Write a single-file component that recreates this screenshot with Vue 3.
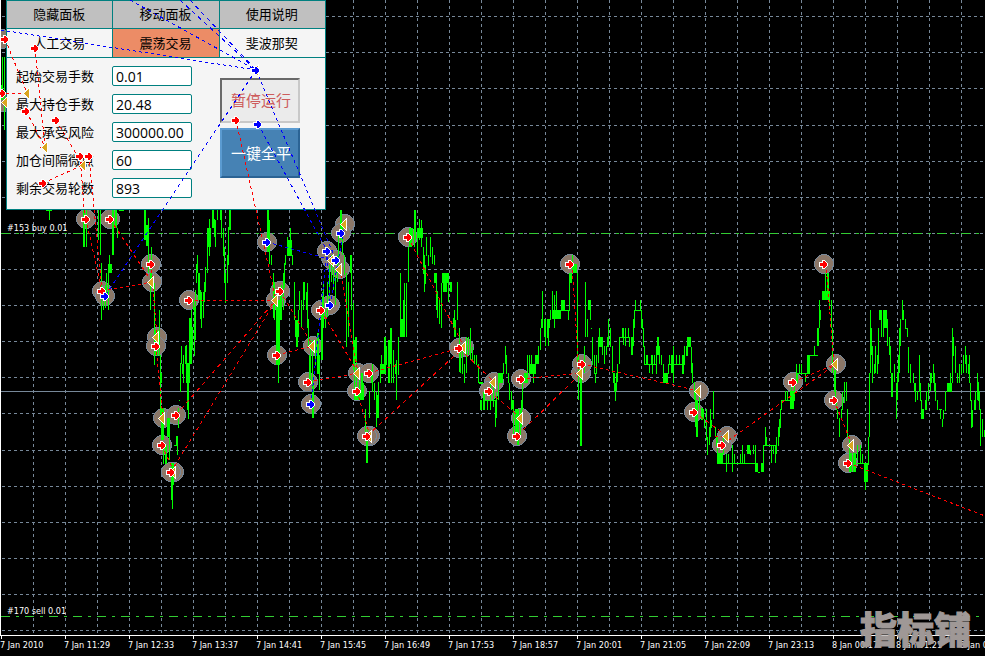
<template>
  <div class="terminal">
    <main class="plot">
      <svg class="layer" aria-hidden="true">
        <line v-for="y in gridRows" :key="'r' + y" class="grid" x1="2" :y1="y" x2="100%" :y2="y" />
        <line v-for="x in gridCols" :key="'c' + x" class="grid" :x1="x" y1="0" :x2="x" y2="100%" />
        <line class="level" x1="1" y1="391.5" x2="100%" y2="391.5" />
        <line class="order" x1="1" y1="233.5" x2="100%" y2="233.5" />
        <line class="order" x1="1" y1="616.5" x2="100%" y2="616.5" />
        <circle v-for="(m, i) in circles" :key="'o' + i" class="halo" :cx="m.x" :cy="m.y" r="9.5" />
        <rect v-for="(b, i) in bars" :key="'b' + i" class="bar" :x="b.x" :y="b.y" :width="b.w" :height="b.h" />
        <line class="edge" x1="0.5" y1="0" x2="0.5" y2="100%" />
        <text class="order-label" x="7" y="231">#153 buy 0.01</text>
        <text class="order-label" x="7" y="614">#170 sell 0.01</text>
      </svg>

      <form class="panel" @submit.prevent>
        <div class="tabs">
          <button type="button" class="head">隐藏面板</button>
          <button type="button" class="head">移动面板</button>
          <button type="button" class="head">使用说明</button>
          <button
            v-for="tab in tabs"
            :key="tab"
            type="button"
            :class="{ active: tab === activeTab }"
            @click="activeTab = tab"
          >{{ tab }}</button>
        </div>
        <div class="panel-body">
          <div class="fields">
            <template v-for="field in fields" :key="field.id">
              <label :for="field.id">{{ field.label }}</label>
              <input :id="field.id" v-model="field.value" type="text">
            </template>
          </div>
          <div class="actions">
            <button type="button" class="pause-btn">暂停运行</button>
            <button type="button" class="close-btn">一键全平</button>
          </div>
        </div>
      </form>

      <svg class="layer overlay" aria-hidden="true">
        <line
          v-for="(l, i) in trades"
          :key="'t' + i"
          class="trade"
          :class="l.color"
          :x1="l.x1"
          :y1="l.y1"
          :x2="l.x2"
          :y2="l.y2"
          :stroke-dasharray="l.dash"
        />
        <g v-for="(m, i) in marks" :key="'m' + i" :transform="`translate(${m.x} ${m.y})`">
          <path v-if="m.kind === 'exit'" class="exit" d="M-4 0.5 L1 -4 V5 Z" />
          <path v-else class="entry" :class="m.kind" d="M-4 -1 H-1 V-3 H0 L3 0 V1 L0 4 H-1 V2 H-4 Z" />
        </g>
      </svg>
    </main>

    <footer class="axis">
      <span v-for="t in times" :key="t">{{ t }}</span>
    </footer>
    <div class="watermark">指标铺</div>
  </div>
</template>

<script setup>
import { ref } from 'vue'

const tabs = ['人工交易', '震荡交易', '斐波那契']
const activeTab = ref('震荡交易')

const fields = ref([
  { id: 'lots', label: '起始交易手数', value: '0.01' },
  { id: 'max-lots', label: '最大持仓手数', value: '20.48' },
  { id: 'max-risk', label: '最大承受风险', value: '300000.00' },
  { id: 'step', label: '加仓间隔微点', value: '60' },
  { id: 'rounds', label: '剩余交易轮数', value: '893' }
])

const times = [
  '7 Jan 2010', '7 Jan 11:29', '7 Jan 12:33', '7 Jan 13:37', '7 Jan 14:41', '7 Jan 15:45',
  '7 Jan 16:49', '7 Jan 17:53', '7 Jan 18:57', '7 Jan 20:01', '7 Jan 21:05', '7 Jan 22:09',
  '7 Jan 23:13', '8 Jan 00:17', '8 Jan 01:21', '8 Jan 02:25'
]

const gridRows = [16, 52, 88, 125, 161, 197, 233, 269, 305, 341, 377, 413, 450, 486, 522, 558, 594, 630].map(y => y + 0.5)
const gridCols = Array.from({ length: 60 }, (_, i) => 33.5 + i * 32)

// x, top, bottom, width (1 when left out)
const barData = `
2 57 93;4 57 130;1 85 100 2;49 210 220;46 210 211 6;83 210 247 2;86 210 247;98 210 240;100 210 255;
101 263 320;103 290 310;105 285 308;106 273 300;108 264 310;108 264 273 4;109 255 273;112 210 255 2;
115 210 228 2;117 228 238;119 210 211 5;144 210 240 2;146 225 246 3;148 218 273;150 273 310;151 247 283;
154 283 365;155 330 355;157 330 356;159 310 356;160 373 383 2;160 355 415;161 408 440 3;163 445 464;
165 445 464 2;167 418 437 3;169 418 460;171 463 500 2;172 480 509;173 463 485;174 445 446 4;177 436 455;
176 436 445;178 408 428;179 400 401;180 363 392;181 346 364;182 364 374;183 355 383;185 346 364;
186 345 383;187 363 410 2;188 390 419;189 318 383;190 318 364;191 310 364;192 327 350;194 307 356;
193 300 310;195 290 340;196 264 283;197 255 273;198 273 300;199 273 300;200 290 319;201 292 328;
203 292 318;204 282 302;205 267 292;207 228 273;207 228 247 4;209 219 256;212 210 228 2;214 219 237;
215 220 247;217 210 220;220 210 220 2;221 210 238;223 228 256;224 247 283;225 273 303;227 255 283;
228 227 265;229 210 230 2;267 210 252 2;269 220 264;271 255 265;273 273 318;274 282 320;276 300 365 4;
278 330 383;280 290 320;281 285 320;283 273 310;284 263 288;285 255 265;287 237 256;288 240 256 4;
290 228 256;292 255 265;294 282 320;295 320 337;296 320 347 2;298 310 337;299 291 310;301 300 328;
303 282 310;304 282 300;306 292 310;307 283 328;308 319 346;309 355 383;310 340 383;312 340 418;
313 383 418;315 340 365;317 333 374 2;319 355 390;321 310 360 2;322 292 330;323 283 328;325 310 328;
327 282 317;329 265 300;331 255 282;333 263 290;335 270 305;337 255 282;338 236 264;340 210 240 2;
342 227 255;344 255 275;346 273 347;348 282 337;350 255 273;351 255 310;353 303 370;354 340 400;
355 337 362 2;356 346 395;355 391 400 9;359 373 400;361 373 400 2;363 383 400;365 409 440;
366 437 463 2;367 428 450;369 391 418;371 370 383;372 364 392;374 383 400;376 392 427;377 395 418;
378 382 418;380 364 383;381 355 374;382 364 374 4;384 337 374 2;386 346 365;388 340 383 2;
390 328 364;391 328 383;393 350 383;395 364 374 2;396 360 400;398 347 375;398 337 356;400 273 337;
401 319 337 2;403 300 337;404 283 337;406 283 337;408 247 282;409 228 247 3;412 228 240;
414 210 247;415 210 240;417 228 255;419 219 240;418 228 238 5;421 220 247;423 247 274;424 255 292;
425 265 284;426 237 256;428 255 266;430 237 257;432 247 264;434 255 265;434 273 283 3;436 283 310;
437 291 318;439 300 324;441 283 328;442 273 283 7;443 283 292 4;448 283 302;450 282 292 2;451 282 290;
453 318 328;454 310 337;455 320 337;457 282 320;459 328 372;460 352 373;462 350 374;464 364 383;
466 337 373;468 337 355;470 328 360;472 347 360;474 355 364;476 355 365;478 364 383;479 382 384 4;
480 400 410 2;483 392 410 2;485 400 401 10;487 400 410;490 382 410;493 383 407;495 400 427;
496 392 418;498 373 400;499 373 383 4;503 363 374;505 346 364;506 355 374;508 373 383;509 383 400;
511 391 410;512 400 409;513 400 437;515 409 437 3;517 437 445;518 409 445;520 410 437;521 400 427;
522 383 410;524 373 383 3;527 355 383;529 355 374;530 364 374 6;531 355 364;533 364 383;535 355 364 4;
538 346 356;540 328 350;541 319 328;542 291 328;544 319 337;545 319 346;547 319 338 2;549 319 328;
548 328 346;550 310 320;552 291 319;553 310 319 8;554 295 328;556 291 310;560 310 311 10;561 300 310 4;
568 310 320;569 273 310;570 273 283 2;572 255 273;573 264 273 4;577 273 365;578 355 400;580 373 446 2;
584 346 373;585 282 337;587 319 337;588 300 310 3;590 300 320;591 328 329;592 337 365;594 355 374;
595 373 383;596 355 374;598 337 363;598 337 347 4;599 328 337;602 337 355;604 346 364;606 346 355;
607 337 347;608 319 347;610 328 347;612 346 373;613 373 383;614 373 392;615 383 401;616 373 391;
617 364 382;619 337 364;619 337 338 10;622 328 337;623 328 345;625 328 346;628 328 337;629 337 347;
631 337 355 2;633 319 346;634 310 328;635 300 311;636 310 311 5;640 300 311;641 310 328;642 319 329;
643 328 347;644 346 364;644 364 365 12;646 355 364 2;649 364 373;651 355 364 2;652 364 374;654 355 364;
656 346 374;657 337 355 2;659 346 364;661 355 365;663 364 383;664 373 383 4;668 364 374;669 355 365;
669 364 365 16;671 355 373 2;673 346 383;676 355 364;679 355 365;682 355 374 2;684 346 364;
686 346 356 2;687 337 347 4;691 347 373;692 363 383;694 382 400;695 392 427;696 400 437 2;699 391 410;
701 408 420 2;703 409 419;704 419 428;706 409 440;707 437 455;709 427 445;710 409 437;711 420 428;
713 391 419;715 427 437;716 437 446;717 437 463;718 453 463 5;717 463 464 39;723 437 454;726 454 472;
728 454 463;732 445 472;734 454 463;740 454 463;742 445 463;744 454 463;747 445 454 3;750 450 455;
753 445 454;755 445 472;756 463 472 2;758 472 473 2;761 463 472 2;763 445 472;765 427 446;766 437 446;
763 445 446 14;771 445 463;773 445 454;775 445 463;776 437 454;778 427 446;779 419 437;780 409 428;
781 400 410;782 400 401 13;785 391 400;787 391 401;790 391 409 4;791 381 391;794 383 400;796 364 383;
797 373 383;799 364 374;801 364 374;796 373 374 14;805 373 382;807 355 373 2;809 355 373;810 355 356 8;
814 346 355;817 328 346 2;819 300 328;820 310 320;822 291 300 5;825 273 300;827 273 300 2;829 291 310;
831 300 328;832 328 373;834 370 392 2;835 383 400;836 400 410;837 410 419;839 418 437;841 409 419;
842 392 410;844 382 403;846 382 401;847 409 437;849 436 472;850 453 472 2;853 453 472 3;857 445 460;
860 445 463;862 454 463;857 463 464 9;864 463 482 4;865 482 490;868 437 465;869 373 437;870 310 373;
871 328 355;872 346 383;874 364 374;875 346 373;877 355 374;878 328 364;879 310 320 3;881 319 337;
883 310 337;884 310 328 3;887 319 346;889 337 355;890 346 373;891 373 397 2;894 364 382;896 383 419;
897 373 400;898 355 382;899 328 373;900 319 346;902 300 320;903 310 320;905 319 329;906 328 329;
907 328 337;908 347 373;910 364 383;913 373 383;914 383 392;915 383 402;917 391 400;919 355 392;
920 383 401;921 400 419;922 409 419 2;925 400 410;926 391 410;928 383 401;930 373 391;931 373 383;
933 364 383;934 373 391;935 383 401;937 400 410;939 409 410 3;940 409 419;942 419 427;943 410 419;
945 391 411;947 383 392 5;950 373 383;952 328 383;953 337 356;955 346 373;957 373 383;959 364 383;
961 364 374;963 355 373;965 346 364;966 355 373;968 364 374;969 355 383;970 383 401;971 400 428;
972 410 427;974 400 410;975 391 410;977 373 400;978 382 401;979 391 410;980 409 446;982 419 437;984 430 437`

const bars = barData.trim().split(';').map(row => {
  const [x, top, bottom, w = 1] = row.trim().split(' ').map(Number)
  return { x, y: top, w, h: bottom - top }
})

const toMarks = (kind, points) => points.map(([x, y]) => ({ kind, x, y }))

const circles = [
  ...toMarks('exit', [
    [152, 282], [157, 337], [163, 418], [174, 472], [276, 300], [345, 224], [332, 260], [340, 269],
    [313, 346], [358, 373], [370, 436], [464, 347], [494, 382], [521, 418], [581, 373], [699, 391],
    [727, 436], [836, 364], [852, 445], [4, 102]
  ]),
  ...toMarks('red', [
    [86, 219], [110, 219], [102, 291], [151, 264], [156, 346], [189, 300], [176, 415], [162, 445],
    [171, 472], [280, 291], [277, 355], [308, 382], [321, 310], [357, 391], [369, 373], [367, 436],
    [408, 237], [459, 348], [489, 391], [521, 379], [517, 436], [570, 264], [582, 364], [694, 412],
    [722, 445], [793, 382], [824, 264], [834, 400], [848, 463], [2, 39]
  ]),
  ...toMarks('blue', [
    [105, 296], [267, 242], [327, 251], [341, 233], [336, 260], [330, 305], [311, 404]
  ])
]

// trades that fall over the control panel carry no circle
const marks = [
  ...circles.filter(m => m.x > 5),
  ...toMarks('exit', [[28, 93], [46, 147], [84, 165], [6, 102], [257, 70]]),
  ...toMarks('red', [[5, 39], [35, 48], [26, 111], [56, 120], [80, 156], [89, 156], [43, 183], [2, 93], [236, 120]]),
  ...toMarks('blue', [[256, 70], [258, 124]])
]

const redLines = [
  [5, 39, 27, 93], [35, 48, 45, 147], [26, 111, 45, 147], [56, 120, 83, 165], [43, 183, 83, 165],
  [0, 93, 27, 93], [40, 147, 45, 147], [80, 156, 85, 219], [89, 156, 102, 291], [86, 219, 102, 291],
  [110, 219, 152, 282], [102, 291, 152, 282], [151, 264, 157, 337], [156, 346, 163, 418],
  [162, 445, 174, 472], [189, 300, 276, 300], [176, 415, 276, 300], [171, 472, 276, 300],
  [236, 120, 276, 300], [280, 291, 313, 346], [277, 355, 313, 346], [308, 382, 358, 373],
  [321, 310, 358, 373], [340, 269, 358, 373], [357, 391, 370, 436], [369, 373, 464, 347],
  [367, 436, 464, 347], [408, 237, 464, 347], [459, 348, 494, 382], [489, 391, 521, 418],
  [521, 379, 581, 373], [517, 436, 581, 373], [572, 264, 579, 373], [582, 364, 699, 391],
  [694, 412, 727, 436], [715, 436, 727, 436], [722, 445, 836, 364], [793, 382, 836, 364],
  [826, 264, 834, 364], [834, 400, 852, 445], [848, 463, 985, 516]
]

const blueLines = [
  [1, 30, 256, 70], [130, 0, 256, 70], [180, 0, 256, 70], [190, 0, 256, 70],
  [256, 70, 105, 296], [256, 70, 336, 260], [258, 124, 332, 260], [267, 242, 332, 260],
  [327, 251, 330, 305], [330, 305, 345, 224], [311, 404, 327, 251]
]

// dashes are three steps along the longer axis, so slanted ones come out longer
const toTrade = color => ([x1, y1, x2, y2]) => {
  const dx = x2 - x1
  const dy = y2 - y1
  const dash = 3 * Math.hypot(dx, dy) / Math.max(Math.abs(dx), Math.abs(dy))
  return { color, x1, y1, x2, y2, dash: `${dash} ${dash}` }
}

const trades = [
  ...redLines.map(toTrade('red')),
  ...blueLines.map(toTrade('blue'))
]
</script>

<style>
body {
  margin: 0;
  background: #000;
}
</style>

<style scoped>
.terminal {
  position: relative;
  display: flex;
  flex-direction: column;
  min-height: 100vh;
  background: #000;
  color: #fff;
  overflow: hidden;
  font-family: "Liberation Sans", "Noto Sans CJK SC", sans-serif;
}

.plot {
  position: relative;
  flex: 1;
  min-height: 520px;
}

.layer {
  position: absolute;
  top: 0;
  left: 0;
  width: 100%;
  height: 100%;
  shape-rendering: crispEdges;
}

.overlay {
  pointer-events: none;
}

.grid {
  stroke: #778899;
  stroke-dasharray: 3 3;
}

.level {
  stroke: #778899;
}

.order {
  stroke: #32cd32;
  stroke-dasharray: 9 6 3 6;
}

.edge {
  stroke: #fff;
}

.halo {
  fill: #8b7768;
  stroke: #778899;
}

.bar {
  fill: #00ff00;
}

.order-label {
  fill: #fff;
  font-family: "DejaVu Sans Condensed", "DejaVu Sans", sans-serif;
  font-size: 9px;
}

.trade.red {
  stroke: #ff0000;
}

.trade.blue {
  stroke: #0000ff;
}

.entry,
.exit {
  stroke: #fff;
  stroke-width: 2;
  paint-order: stroke;
}

.entry.red {
  fill: #ff0000;
}

.entry.blue {
  fill: #0000ff;
}

.exit {
  fill: #daa520;
}

.panel {
  position: relative;
  box-sizing: border-box;
  width: 320px;
  margin-left: 6px;
  background: #f5f5f5;
  border: 1px solid #008080;
  color: #000;
  font-size: 13px;
}

.tabs {
  display: grid;
  grid-template-columns: repeat(3, 1fr);
  gap: 1px;
  background: #008080;
  border-bottom: 1px solid #008080;
}

button {
  box-sizing: border-box;
  margin: 0;
  padding: 0;
  border: none;
  border-radius: 0;
  font-family: inherit;
  font-size: 13px;
  cursor: pointer;
}

.tabs button {
  height: 28px;
  padding: 0 1px 2px 0;
  background: #f5f5f5;
  color: #000;
}

.tabs .head {
  height: 27px;
  background: #c0c0c0;
}

.tabs .active {
  background: #ec8c66;
}

.panel-body {
  display: flex;
  justify-content: space-between;
  padding: 8px 25px 11px 9px;
}

.fields {
  display: grid;
  grid-template-columns: 96px 80px;
  row-gap: 8px;
  align-items: center;
}

label {
  padding-top: 2px;
  line-height: 18px;
}

input {
  box-sizing: border-box;
  width: 80px;
  height: 20px;
  padding: 0 3px;
  border: 1px solid #008080;
  border-radius: 2px;
  background: #fff;
  color: #000;
  font-family: "Open Sans", "Noto Sans", sans-serif;
  font-size: 14px;
}

.actions {
  display: flex;
  flex-direction: column;
  gap: 5px;
  width: 80px;
  padding-top: 12px;
}

.actions button {
  padding: 0 0 2px 2px;
  font-size: 15px;
}

.pause-btn {
  height: 45px;
  background: #ebebeb;
  color: #cd5c5c;
  border: 2px solid #c8c8c8;
  border-top-color: #696969;
  border-left-color: #696969;
}

.close-btn {
  height: 50px;
  background: #4682b4;
  color: #fff;
  border: 2px solid #2b6394;
  border-top-color: #5b9bd1;
  border-left-color: #5b9bd1;
}

.axis {
  display: flex;
  height: 20px;
  border-top: 1px solid #fff;
  overflow: hidden;
  font-family: "DejaVu Sans Condensed", "DejaVu Sans", sans-serif;
  font-size: 9px;
  line-height: 19px;
  white-space: nowrap;
}

.axis span {
  flex: 0 0 64px;
  background: linear-gradient(#fff, #fff) 1px 0 / 1px 3px no-repeat;
}

.watermark {
  position: absolute;
  right: 14px;
  bottom: 9px;
  color: #9f9896;
  font-family: "Noto Sans CJK SC", sans-serif;
  font-size: 37px;
  font-weight: 900;
  line-height: 37px;
  -webkit-text-stroke: 1px #9f9896;
}
</style>
